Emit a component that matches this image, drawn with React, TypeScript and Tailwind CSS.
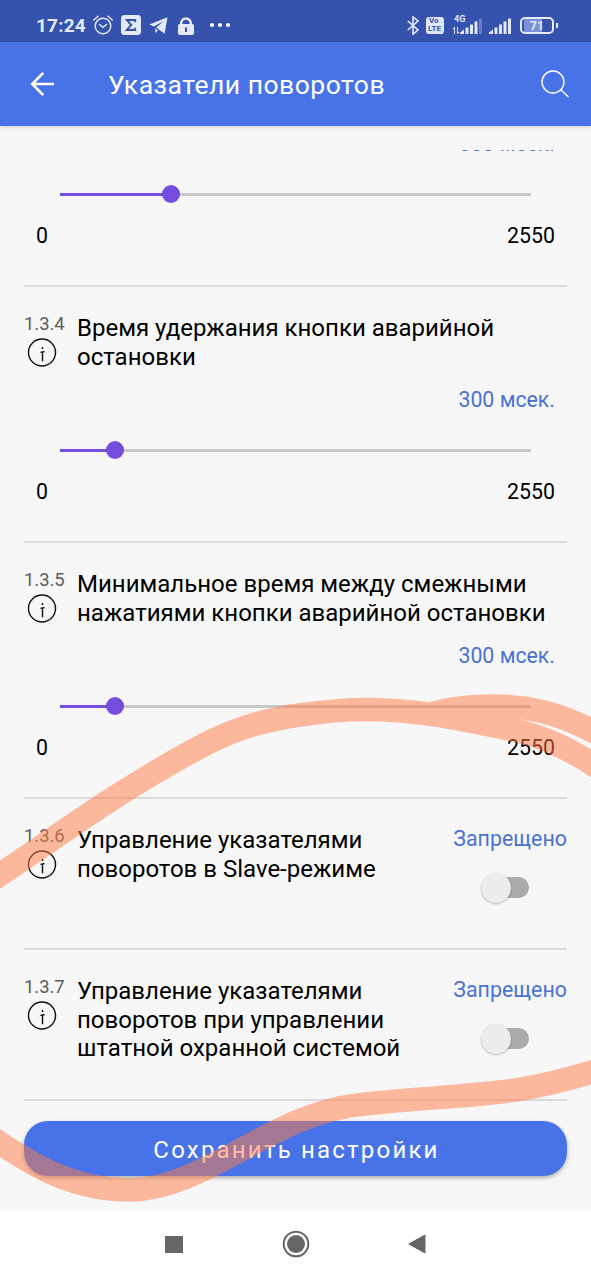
import { useState } from "react";

type SliderSetting = {
  kind: "slider";
  code: string;
  title: string;
  value: number;
  max: number;
};

type ToggleSetting = {
  kind: "toggle";
  code: string;
  title: string;
  enabled: boolean;
};

type Setting = SliderSetting | ToggleSetting;

const initialSettings: Setting[] = [
  { kind: "slider", code: "1.3.4", title: "Время удержания кнопки аварийной остановки", value: 300, max: 2550 },
  {
    kind: "slider",
    code: "1.3.5",
    title: "Минимальное время между смежными нажатиями кнопки аварийной остановки",
    value: 300,
    max: 2550,
  },
  { kind: "toggle", code: "1.3.6", title: "Управление указателями поворотов в Slave-режиме", enabled: false },
  {
    kind: "toggle",
    code: "1.3.7",
    title: "Управление указателями поворотов при управлении штатной охранной системой",
    enabled: false,
  },
];

function SignalBars({ weak = false }: { weak?: boolean }) {
  return (
    <svg className="h-4 w-[23px]" viewBox="0 0 23 16" fill="#dfe6fa">
      <path d="M0 16v-1.500l4-3V16z" />
      <rect x="5.500" y="9.500" width="3" height="6.500" />
      <rect x="10" y="6.500" width="3" height="9.500" />
      <rect x="14.500" y="3.500" width="3" height="12.500" />
      <rect x="19" y="0.500" width="3" height="15.500" opacity={weak ? 0.3 : 1} />
    </svg>
  );
}

function StatusBar() {
  return (
    <div className="flex h-[42px] items-end bg-[#3553ad] pr-[33px] pb-[7px] pl-9 text-[#e4eafc]">
      <span className="-mb-px w-[57px] text-[19px] leading-5 font-bold tracking-[0.200px]">17:24</span>
      <svg className="h-5 w-5" viewBox="0 0 20 20" fill="none" stroke="currentColor" strokeWidth="1.400">
        <circle cx="10" cy="11" r="7.800" />
        <path d="M6.500 9.500l3.500 2.800 3.500-2.800M0.800 5L5 1.300M19.200 5L15 1.300" strokeLinecap="round" />
      </svg>
      <svg className="ml-2 h-5 w-5" viewBox="0 0 20 20">
        <rect width="20" height="20" rx="3.500" fill="currentColor" />
        <path d="M14.200 7.300V5H5.800l4.400 5-4.400 5h8.400v-2.300" fill="none" stroke="#3553ad" strokeWidth="1.900" />
      </svg>
      <svg className="mb-px ml-2 h-[17px] w-[19px]" viewBox="0 0 19 17" fill="currentColor">
        <path d="M18.500 0.300L0.300 7.600l4.700 2L14.500 4 7.300 10.600 15.500 16.800z" />
        <path d="M6.300 11.200v5l2.500-3z" />
      </svg>
      <svg className="ml-[10px] h-[18px] w-4" viewBox="0 0 16 18">
        <path d="M3.200 9V6.300a4.800 4.800 0 019.600 0V9" fill="none" stroke="currentColor" strokeWidth="2.400" />
        <rect y="7" width="16" height="11" rx="2" fill="currentColor" />
        <path d="M8 10.500v4.500" stroke="#3553ad" strokeWidth="2" />
      </svg>
      <div className="mb-[8px] ml-[16px] flex gap-[4px]">
        <i className="size-[4px] rounded-full bg-white" />
        <i className="size-[4px] rounded-full bg-white" />
        <i className="size-[4px] rounded-full bg-white" />
      </div>
      <svg className="ml-auto h-[19px] w-3" viewBox="0 0 12 19" fill="none" stroke="currentColor" strokeWidth="1.600">
        <path d="M0.800 5l10.200 9-5 4V1l5 4-10.200 9" />
      </svg>
      <div className="mb-px ml-[7px] h-[17px] w-[18px] rounded-[3px] bg-[#dfe6fa] pl-[3px] text-[8px] leading-[8px] font-bold text-[#3553ad]">
        <div>Vo</div>
        <div className="-ml-px text-[8px]">LTE</div>
      </div>
      <div className="mb-px ml-2 flex h-[19px] flex-none items-end">
        <div className="flex h-[19px] w-2 flex-col justify-between">
          <span className="pl-[2px] text-[9px] leading-[8px] font-bold">4G</span>
          <svg className="h-[7px] w-2" viewBox="0 0 8 7" stroke="currentColor" fill="none">
            <path d="M2.500 7V0.500M5.500 0v6.500L7 5M2.500 0.500L1 2" />
          </svg>
        </div>
        <SignalBars weak />
      </div>
      <div className="mb-px ml-[6px]">
        <SignalBars />
      </div>
      <div className="mb-px ml-[8px] flex items-center gap-[2px]">
        <div className="flex h-[17px] w-[34px] items-center justify-center rounded-[5px] border-2 border-current bg-[linear-gradient(90deg,#3553ad_8%,#7a90d8_8%,#7a90d8_68%,#3553ad_68%)] text-[12px] leading-3 font-bold">
          71
        </div>
        <i className="h-[5px] w-[2px] bg-current" />
      </div>
    </div>
  );
}

function Header() {
  return (
    <header className="relative flex h-[84px] items-center bg-[#4873e8] pr-[22px] pl-[30px] text-white shadow-[0_1px_5px_rgba(0,0,0,0.18)]">
      <svg className="h-6 w-6" viewBox="0 0 24 24" fill="none" stroke="currentColor" strokeWidth="2.600">
        <path d="M24 12H2M13.300 0.900L2.200 12l11.100 11.100" />
      </svg>
      <h1 className="mt-px ml-[54px] text-[26.500px] leading-8 tracking-[0.500px]">Указатели поворотов</h1>
      <svg className="ml-auto h-7 w-7" viewBox="0 0 28 28" fill="none" stroke="currentColor" strokeWidth="1.400">
        <circle cx="12" cy="12" r="11" />
        <path d="M20 20l7.500 7" />
      </svg>
    </header>
  );
}

function CodeWithInfo({ code }: { code: string }) {
  return (
    <div className="w-[53px] flex-none">
      <div className="text-[18.400px] leading-[20px] text-[#5c5c5c]">{code}</div>
      <svg className="mt-[4px] ml-[3px] h-[30px] w-[30px]" viewBox="0 0 30 30" fill="none" stroke="#111" strokeWidth="1.400">
        <circle cx="15" cy="14.500" r="13.500" />
        <path d="M15.500 9v2M13.500 14.200h2v9M17.500 13.700h-2" />
      </svg>
    </div>
  );
}

function SliderControl({ value, max }: { value: number; max: number }) {
  const percent = `${(value / max) * 100}%`;

  return (
    <>
      <div className="mt-4 pr-[12px] text-right text-[21.300px] leading-6 text-[#4a72d3]">{value} мсек.</div>
      <div className="relative mx-9 mt-7 flex h-5 items-center">
        <div className="h-[3px] w-full bg-[#c9c9c9]">
          <div className="h-full bg-[#764ddd]" style={{ width: percent }} />
        </div>
        <div className="absolute size-[18px] -translate-x-1/2 rounded-full bg-[#764ddd]" style={{ left: percent }} />
      </div>
      <div className="mt-5 flex justify-between pr-[12px] pl-3 text-[21.300px] leading-6 text-black">
        <span>0</span>
        <span>{max}</span>
      </div>
    </>
  );
}

function SliderRow({ setting }: { setting: SliderSetting }) {
  return (
    <section className="h-[256px] flex-none border-b-2 border-[#dadada] pt-[27px]">
      <div className="flex h-[58px]">
        <CodeWithInfo code={setting.code} />
        <h2 className="flex-1 text-[24px] leading-[28.700px] text-black">{setting.title}</h2>
      </div>
      <SliderControl value={setting.value} max={setting.max} />
    </section>
  );
}

function ToggleRow({ setting, onToggle }: { setting: ToggleSetting; onToggle: () => void }) {
  return (
    <section className="flex h-[151px] flex-none border-b-2 border-[#dadada] pt-[27px]">
      <CodeWithInfo code={setting.code} />
      <h2 className="w-[345px] text-[24px] leading-[28.700px] text-black">{setting.title}</h2>
      <div className="ml-auto flex flex-col items-end">
        <span className="mt-px text-[21.400px] leading-6 text-[#4a72d3]">
          {setting.enabled ? "Разрешено" : "Запрещено"}
        </span>
        <button className="mt-[21px] mr-[38px] flex h-[31px] w-12 items-center" onClick={onToggle}>
          <span className="flex h-[21px] w-12 items-center rounded-full bg-[#ababab]">
            <span className="size-[30px] rounded-full bg-[#ececec] shadow-[0_1px_2px_rgba(0,0,0,0.25)]" />
          </span>
        </button>
      </div>
    </section>
  );
}

// Freehand marker drawn over the page
function MarkerStrokes() {
  return (
    <svg
      className="pointer-events-none absolute inset-0 h-[1280px] w-[591px]"
      viewBox="0 0 591 1280"
      fill="none"
      stroke="#ff7b45"
      strokeWidth="23.500"
      opacity="0.5"
    >
      <path d="M-20 888C30 855 70 826 115 797C150 775 175 760 200 747C235 728 265 720 300 715C325 711 350 709.500 370 709.500C420 710 465 720 510 729C545 737 570 749 600 769" />
      <path d="M432 714C450 708 472 706 495 706C530 706 562 714 600 735" />
      <path d="M-15 1133C35 1168 75 1190 130 1190C180 1189 225 1157 275 1132C300 1119 325 1110 350 1106C400 1099 450 1098 500 1092C530 1089 560 1082 605 1068" />
    </svg>
  );
}

function NavigationBar() {
  return (
    <nav className="flex h-[70px] items-center justify-center gap-[98px] bg-white pb-[2px]">
      <div className="h-[17px] w-[18px] bg-[#666]" />
      <svg className="ml-[1px] h-7 w-7" viewBox="0 0 28 28" fill="#666">
        <circle cx="14" cy="14" r="12.300" fill="none" stroke="#666" strokeWidth="2" />
        <circle cx="14" cy="14" r="9" />
      </svg>
      <svg className="h-5 w-[18px]" viewBox="0 0 18 20" fill="#666" stroke="#666" strokeLinejoin="round">
        <path d="M17 1v18L0.800 10z" />
      </svg>
    </nav>
  );
}

export default function App() {
  const [settings, setSettings] = useState<Setting[]>(initialSettings);

  function toggle(code: string) {
    setSettings((prev) =>
      prev.map((item) => (item.kind === "toggle" && item.code === code ? { ...item, enabled: !item.enabled } : item))
    );
  }

  return (
    <div className="relative flex h-[1280px] w-[591px] flex-col overflow-hidden bg-[#f7f7f7] font-[Roboto,sans-serif]">
      <StatusBar />
      <Header />
      <main className="mt-6 flex min-h-0 flex-1 flex-col px-6">
        <div className="flex flex-col overflow-hidden">
          <div className="-mt-[34px] h-[171px] flex-none border-b-2 border-[#dadada]">
            <SliderControl value={600} max={2550} />
          </div>
          {settings.map((setting) =>
            setting.kind === "slider" ? (
              <SliderRow key={setting.code} setting={setting} />
            ) : (
              <ToggleRow key={setting.code} setting={setting} onToggle={() => toggle(setting.code)} />
            )
          )}
        </div>
        <button className="mt-5 h-[55px] flex-none rounded-[24px] bg-[#4873e8] pt-[2px] pl-[2px] text-[24px] leading-7 tracking-[2.200px] text-white shadow-[0_2px_4px_rgba(0,0,0,0.3)]">
          Сохранить настройки
        </button>
      </main>
      <NavigationBar />
      <MarkerStrokes />
    </div>
  );
}
